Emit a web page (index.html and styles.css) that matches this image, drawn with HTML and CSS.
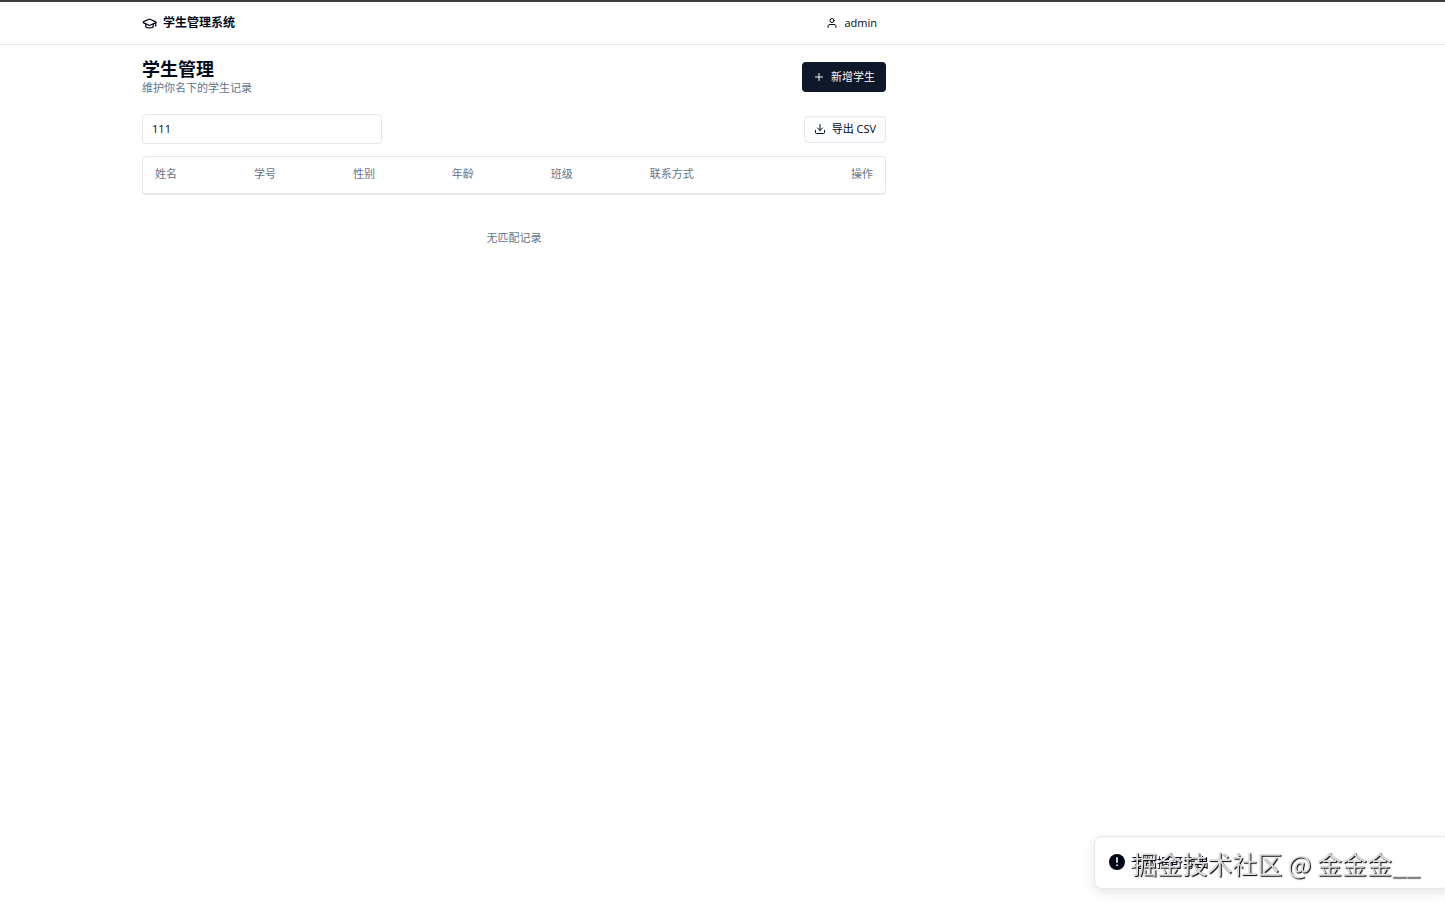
FILE: index.html
```html
<!DOCTYPE html>
<html lang="zh-CN">
<head>
  <meta charset="UTF-8">
  <meta name="viewport" content="width=device-width, initial-scale=1.0">
  <title>学生管理系统</title>
  <link rel="stylesheet" href="styles.css">
</head>
<body>
  <header class="site-header">
    <div class="container header-inner">
      <a href="#" class="brand">
        <svg class="icon brand-icon" viewBox="0 0 24 24">
          <path d="M21.42 10.922a1 1 0 0 0-.019-1.838L12.83 5.18a2 2 0 0 0-1.66 0L2.6 9.08a1 1 0 0 0 0 1.832l8.57 3.908a2 2 0 0 0 1.66 0z"/>
          <path d="M22 10v6"/>
          <path d="M6 12.5V16a6 3 0 0 0 12 0v-3.5"/>
        </svg>
        学生管理系统
      </a>
      <button type="button" class="user-menu">
        <svg class="icon" viewBox="0 0 24 24">
          <circle cx="12" cy="7" r="4"/>
          <path d="M20 21v-2a4 4 0 0 0-4-4H8a4 4 0 0 0-4 4v2"/>
        </svg>
        admin
      </button>
    </div>
  </header>

  <main class="container">
    <div class="page-head">
      <div>
        <h1>学生管理</h1>
        <p class="subtitle">维护你名下的学生记录</p>
      </div>
      <button type="button" class="btn btn-primary">
        <svg class="icon" viewBox="0 0 24 24">
          <path d="M5 12h14M12 5v14"/>
        </svg>
        新增学生
      </button>
    </div>

    <div class="toolbar">
      <input type="text" class="search" value="111" aria-label="搜索学生">
      <button type="button" class="btn btn-outline">
        <svg class="icon" viewBox="0 0 24 24">
          <path d="M12 3v12M7 10l5 5 5-5"/>
          <path d="M3 15v4a2 2 0 0 0 2 2h14a2 2 0 0 0 2-2v-4"/>
        </svg>
        导出 CSV
      </button>
    </div>

    <div class="table-card">
      <table>
        <thead>
          <tr>
            <th>姓名</th>
            <th>学号</th>
            <th>性别</th>
            <th>年龄</th>
            <th>班级</th>
            <th class="col-contact">联系方式</th>
            <th class="col-actions">操作</th>
          </tr>
        </thead>
      </table>
    </div>
    <p class="empty">无匹配记录</p>
  </main>

  <div class="toast" role="status">
    <svg class="toast-icon" viewBox="0 0 20 20">
      <circle cx="10" cy="10" r="10"/>
      <path d="M10 4v7M10 13v2"/>
    </svg>
    <span>无数据可导出</span>
  </div>

  <div class="watermark">掘金技术社区 @ 金金金__</div>
</body>
</html>
```

FILE: styles.css
```css
:root {
  --text: #020817;
  --muted: #64748b;
  --border: #e5e7eb;
  --primary: #0f172a;
}

* {
  box-sizing: border-box;
}

body {
  margin: 0;
  font-family: "Open Sans", "Noto Sans CJK SC", sans-serif;
  font-size: 11px;
  line-height: 16px;
  color: var(--text);
  background: #fff;
}

h1,
p {
  margin: 0;
}

button,
input {
  font: inherit;
  color: inherit;
}

.container {
  max-width: 768px;
  margin-left: 9%;
  padding: 0 12px;
}

.icon {
  width: 12px;
  height: 12px;
  flex-shrink: 0;
  fill: none;
  stroke: currentColor;
  stroke-width: 2;
  stroke-linecap: round;
  stroke-linejoin: round;
}

/* Header */
.site-header {
  border-top: 2px solid #3c3c3c;
  border-bottom: 1px solid var(--border);
}

.header-inner {
  display: flex;
  align-items: center;
  justify-content: space-between;
  height: 42px;
}

.brand {
  display: flex;
  align-items: center;
  gap: 6px;
  font-size: 12px;
  font-weight: 600;
  color: inherit;
  text-decoration: none;
}

.brand-icon {
  width: 15px;
  height: 15px;
}

.user-menu {
  display: flex;
  align-items: center;
  gap: 6px;
  padding: 4px 9px;
  border: 0;
  background: none;
}

/* Page title and toolbar */
.page-head {
  display: flex;
  align-items: center;
  justify-content: space-between;
  padding-top: 13px;
}

h1 {
  font-size: 18px;
  font-weight: 700;
  line-height: 22px;
}

.subtitle {
  color: var(--muted);
}

.btn {
  display: flex;
  align-items: center;
  gap: 6px;
  border-radius: 4px;
}

.btn-primary {
  height: 30px;
  padding: 0 11px;
  border: 0;
  background: var(--primary);
  color: #f8fafc;
}

.btn-outline {
  height: 27px;
  padding: 0 9px;
  border: 1px solid var(--border);
  background: #fbfdfe;
}

.toolbar {
  display: flex;
  align-items: center;
  justify-content: space-between;
  margin-top: 18px;
}

.search {
  width: 240px;
  height: 30px;
  padding: 0 9px 2px;
  border: 1px solid var(--border);
  border-radius: 4px;
  background: #fff;
}

/* Table */
.table-card {
  margin-top: 12px;
  border: 1px solid var(--border);
  border-bottom-width: 2px;
  border-radius: 4px;
}

table {
  width: 100%;
  table-layout: fixed;
  border-collapse: collapse;
}

th {
  height: 36px;
  padding: 0 12px 2px;
  font-weight: 400;
  text-align: left;
  color: var(--muted);
}

.col-contact {
  width: 20%;
}

th.col-actions {
  text-align: right;
}

.empty {
  margin-top: 35px;
  text-align: center;
  color: var(--muted);
}

/* Toast */
.toast {
  position: fixed;
  right: -5px;
  bottom: 15px;
  display: flex;
  align-items: center;
  gap: 6px;
  width: 356px;
  height: 53px;
  padding: 0 14px 2px;
  border: 1px solid var(--border);
  border-radius: 8px;
  background: #fff;
  box-shadow: 0 4px 12px rgba(0, 0, 0, 0.1);
  font-size: 13px;
}

.toast-icon {
  width: 16px;
  height: 16px;
  fill: var(--text);
}

.toast-icon path {
  fill: none;
  stroke: #fff;
  stroke-width: 2;
}

.watermark {
  position: fixed;
  right: 25px;
  bottom: 23px;
  font-family: "Noto Sans CJK SC", sans-serif;
  font-size: 25px;
  line-height: 36px;
  color: #dcdcdc;
  text-shadow: 1px 1px 1px #000;
  pointer-events: none;
}
```
